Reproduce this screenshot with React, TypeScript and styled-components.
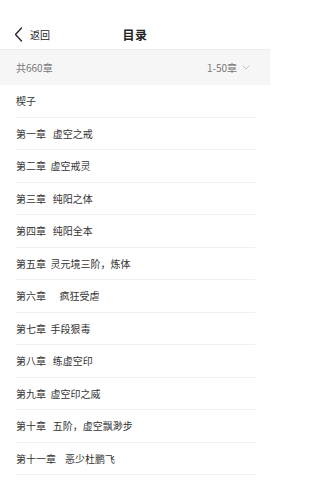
import styled, { createGlobalStyle } from "styled-components";

const chapters = [
  "楔子",
  "第一章   虚空之戒",
  "第二章  虚空戒灵",
  "第三章   纯阳之体",
  "第四章   纯阳全本",
  "第五章  灵元境三阶，炼体",
  "第六章      疯狂受虐",
  "第七章  手段狠毒",
  "第八章   练虚空印",
  "第九章  虚空印之威",
  "第十章   五阶，虚空飘渺步",
  "第十一章    恶少杜鹏飞",
];

const GlobalStyle = createGlobalStyle`
  html, body {
    margin: 0;
    padding: 0;
    background: #ffffff;
  }
  body {
    font-family: "Noto Sans CJK SC", "Noto Sans", sans-serif;
    color: #333333;
  }
`;

const App = () => {
  return (
    <>
      <GlobalStyle />
      <Page>
        <Header>
          <BackButton>
            <svg width="9" height="15" viewBox="0 0 9 15">
              <path
                d="M7.5 1 L1.5 7.5 L7.5 14"
                fill="none"
                stroke="#222"
                strokeWidth="1.3"
                strokeLinecap="round"
                strokeLinejoin="round"
              />
            </svg>
            <span>返回</span>
          </BackButton>
          <Title>目录</Title>
        </Header>
        <InfoBar>
          <span>共660章</span>
          <RangeSelect>
            1-50章
            <svg width="8" height="5" viewBox="0 0 8 5">
              <path
                d="M1 1 L4 4 L7 1"
                fill="none"
                stroke="#c4c4c4"
                strokeWidth="1"
                strokeLinecap="round"
              />
            </svg>
          </RangeSelect>
        </InfoBar>
        <ChapterList>
          {chapters.map((title) => (
            <ChapterItem key={title}>{title}</ChapterItem>
          ))}
        </ChapterList>
      </Page>
    </>
  );
};

export default App;

const Page = styled.div`
  width: 270px;
  height: 480px;
  overflow: hidden;
  background: #ffffff;
`;

const Header = styled.header`
  position: relative;
  height: 29px;
  padding-top: 20px;
  display: flex;
  align-items: center;
  justify-content: center;
  border-bottom: 1px solid #ececec;
  box-sizing: content-box;
`;

const BackButton = styled.div`
  position: absolute;
  left: 14px;
  top: 20px;
  height: 29px;
  display: flex;
  align-items: center;
  gap: 7px;
  font-size: 10px;
  color: #222;
`;

const Title = styled.h1`
  margin: 0;
  font-size: 12px;
  font-weight: bold;
  color: #222;
  letter-spacing: 0.5px;
`;

const InfoBar = styled.div`
  height: 35px;
  padding: 0 16px;
  display: flex;
  align-items: center;
  justify-content: space-between;
  background: #f6f6f6;
  font-size: 10px;
  color: #777;
`;

const RangeSelect = styled.div`
  display: flex;
  align-items: center;
  gap: 5px;
  padding-right: 4px;
`;

const ChapterList = styled.ul`
  list-style: none;
  margin: 0;
  padding: 0 15px 0 16px;
`;

const ChapterItem = styled.li`
  height: 32.5px;
  box-sizing: border-box;
  display: flex;
  align-items: center;
  border-bottom: 1px solid #f0f0f0;
  font-size: 10px;
  color: #333;
  white-space: pre;
`;
